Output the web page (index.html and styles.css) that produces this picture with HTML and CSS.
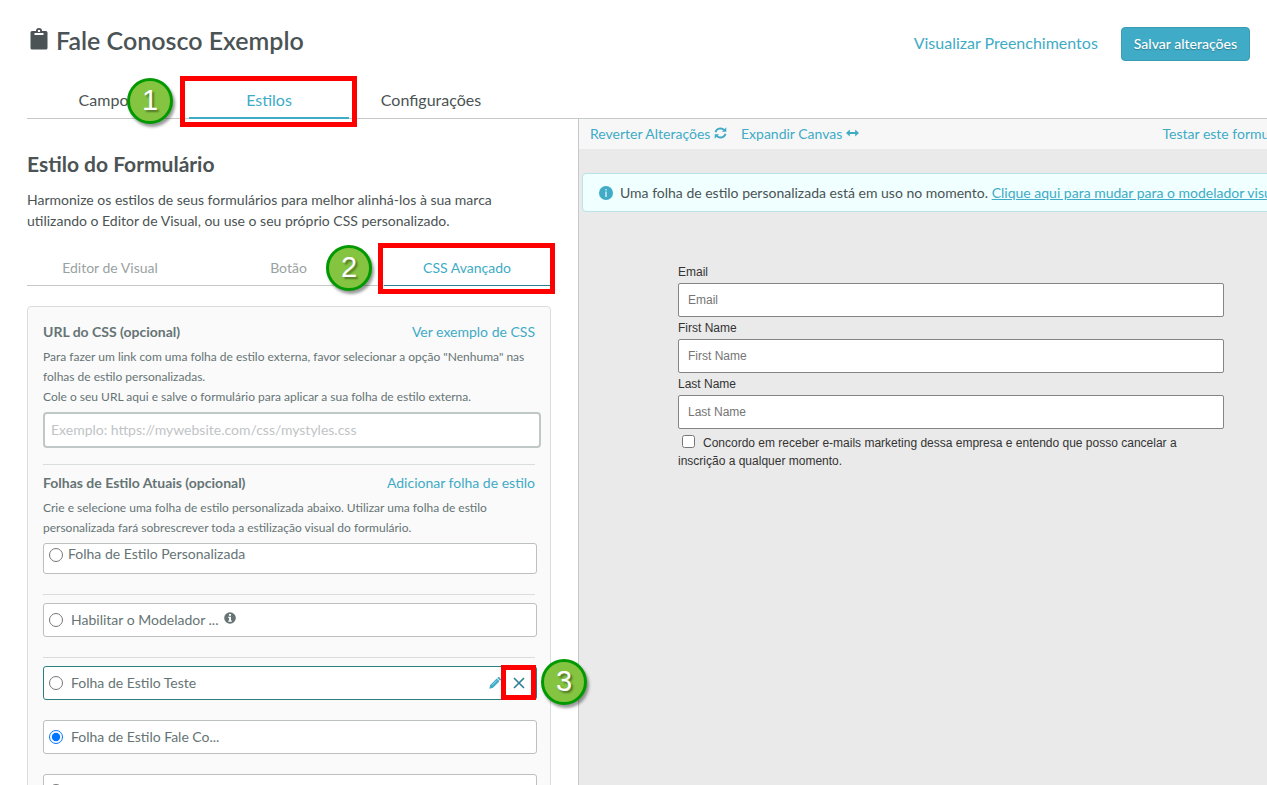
FILE: index.html
```
<!DOCTYPE html>
<html lang="pt-BR">
<head>
<meta charset="utf-8">
<meta name="viewport" content="width=device-width, initial-scale=1">
<title>Fale Conosco Exemplo</title>
<link rel="stylesheet" href="styles.css">
</head>
<body>
<div class="page">
  <header class="header">
    <h1 class="title">
      <svg class="title-icon" viewBox="0 0 18 22" width="18" height="22" aria-hidden="true"><path fill="currentColor" fill-rule="evenodd" d="M2 3h4a3 3 0 0 1 6 0h4a1.500 1.500 0 0 1 1.500 1.500v15.500a1.500 1.500 0 0 1-1.500 1.500H2a1.500 1.500 0 0 1-1.500-1.500V4.500A1.500 1.500 0 0 1 2 3zm7-1.300a1.200 1.200 0 1 0 0 2.400 1.200 1.200 0 0 0 0-2.400zM4.500 5v2h9V5z"/></svg>
      Fale Conosco Exemplo
    </h1>
    <div class="actions">
      <a class="view-link" href="#preenchimentos">Visualizar Preenchimentos</a>
      <button class="save" type="button">Salvar alterações</button>
    </div>
  </header>

  <nav class="tabs">
    <a class="tab" href="#campos">Campos</a>
    <a class="tab tab-active" href="#estilos">Estilos<span class="mark mark-tab"></span><span class="step step-tab">1</span></a>
    <a class="tab" href="#config">Configurações</a>
  </nav>

  <div class="workspace">
    <main class="editor">
      <h2 class="heading">Estilo do Formulário</h2>
      <p class="intro">Harmonize os estilos de seus formulários para melhor alinhá-los à sua marca utilizando o Editor de Visual, ou use o seu próprio CSS personalizado.</p>

      <nav class="subtabs">
        <a class="subtab" href="#visual">Editor de Visual</a>
        <a class="subtab" href="#botao">Botão</a>
        <a class="subtab subtab-active" href="#css">CSS Avançado<span class="mark mark-subtab"></span><span class="step step-subtab">2</span></a>
      </nav>

      <section class="panel">
        <div class="row">
          <label class="label" for="css-url">URL do CSS (opcional)</label>
          <a class="link" href="#exemplo">Ver exemplo de CSS</a>
        </div>
        <p class="help">Para fazer um link com uma folha de estilo externa, favor selecionar a opção "Nenhuma" nas folhas de estilo personalizadas.<br>Cole o seu URL aqui e salve o formulário para aplicar a sua folha de estilo externa.</p>
        <input class="url" id="css-url" type="text" placeholder="Exemplo: https://mywebsite.com/css/mystyles.css">
        <hr class="rule">
        <div class="row row-sheets">
          <h3 class="label">Folhas de Estilo Atuais (opcional)</h3>
          <a class="link" href="#adicionar">Adicionar folha de estilo</a>
        </div>
        <p class="help">Crie e selecione uma folha de estilo personalizada abaixo. Utilizar uma folha de estilo personalizada fará sobrescrever toda a estilização visual do formulário.</p>
        <label class="option option-custom"><input class="radio" type="radio" name="sheet">Folha de Estilo Personalizada</label>
        <hr class="rule">
        <label class="option option-ruled"><input class="radio" type="radio" name="sheet">Habilitar o Modelador ...
          <svg class="hint" viewBox="0 0 12 12" width="12" height="12" aria-hidden="true"><circle cx="6" cy="6" r="5.800" fill="currentColor"/><path fill="#fff" d="M5 2h2v1.800H5zM4.300 4.800H7v3.700h.8v1.200H4.300V8.500h.8V6h-.8z"/></svg>
        </label>
        <hr class="rule">
        <div class="option option-ruled option-focus">
          <input class="radio" type="radio" name="sheet" id="sheet-teste"><label for="sheet-teste">Folha de Estilo Teste</label>
          <button class="tool" type="button" aria-label="Editar"><svg viewBox="0 0 12 12" width="12" height="12"><path fill="#40abc6" d="M.3 11.700 1.200 8 7.700 1.500l2.800 2.800L4 10.800zM8.300.9l.6-.6a1 1 0 0 1 1.400 0l1.400 1.400a1 1 0 0 1 0 1.400l-.6.6z"/><path d="M3 8.300 7.800 3.500" stroke="#c9e8f0" stroke-width=".7"/></svg></button>
          <button class="tool tool-close" type="button" aria-label="Excluir"><svg viewBox="0 0 12 12" width="12" height="12"><path d="M1 1l10 10M11 1L1 11" stroke="#2b7f93" stroke-width="1.600" fill="none"/></svg><span class="mark mark-close"></span><span class="step step-close">3</span></button>
        </div>
        <label class="option"><input class="radio" type="radio" name="sheet" checked>Folha de Estilo Fale Co...</label>
        <div class="option"><input class="radio" type="radio" name="sheet" aria-label="Folha de estilo"></div>
      </section>
    </main>

    <section class="preview">
      <div class="toolbar">
        <a class="link" href="#reverter">Reverter Alterações <svg viewBox="0 0 12 12" width="13" height="12" aria-hidden="true"><path d="M1 5.200a5 4.500 0 0 1 8.800-2M11 6.800a5 4.500 0 0 1-8.800 2" fill="none" stroke="currentColor" stroke-width="1.800"/><path fill="currentColor" d="M11.800.3v4.400H7.400zM.2 11.700V7.300h4.400z"/></svg></a>
        <a class="link" href="#expandir">Expandir Canvas <svg viewBox="0 0 13 12" width="13" height="12" aria-hidden="true"><path fill="currentColor" d="M0 6l3.800-3.500V5h5.400V2.500L13 6 9.200 9.500V7H3.800v2.500z"/></svg></a>
        <a class="link toolbar-end" href="#testar">Testar este formulário</a>
      </div>
      <div class="canvas">
        <div class="notice">
          <svg viewBox="0 0 14 14" width="14" height="14" aria-hidden="true"><circle cx="7" cy="7" r="7" fill="#40abc6"/><path fill="#d5f1f6" d="M6.300 3h1.400v1.400H6.300zM6.300 5.500h1.400V11H6.300z"/></svg>
          <span>Uma folha de estilo personalizada está em uso no momento. <a class="notice-link" href="#modelador">Clique aqui para mudar para o modelador visual</a></span>
        </div>
        <form class="form">
          <label for="email">Email</label>
          <input class="field" id="email" type="email" placeholder="Email">
          <label for="first">First Name</label>
          <input class="field" id="first" type="text" placeholder="First Name">
          <label for="last">Last Name</label>
          <input class="field" id="last" type="text" placeholder="Last Name">
          <label class="consent"><input class="check" type="checkbox">Concordo em receber e-mails marketing dessa empresa e entendo que posso cancelar a inscrição a qualquer momento.</label>
        </form>
      </div>
    </section>
  </div>
</div>
</body>
</html>
```
FILE: styles.css
```
* { box-sizing: border-box; }

body {
  margin: 0;
  background: #fff;
  color: #4b5354;
  font-family: Lato, "Liberation Sans", sans-serif;
  font-size: 14px;
  overflow: hidden;
}

a { color: #40abc6; text-decoration: none; }

.page {
  display: flex;
  flex-direction: column;
  height: 100vh;
  overflow: hidden;
}

.header {
  display: flex;
  flex: none;
  align-items: center;
  justify-content: space-between;
  height: 82px;
  padding: 6px 17px 0 30px;
}

.title {
  display: flex;
  align-items: center;
  gap: 8px;
  margin: 0;
  padding-bottom: 8px;
  font-size: 25px;
  font-weight: 600;
  line-height: 32px;
}

.title-icon { margin-bottom: 2px; }

.actions {
  display: flex;
  align-items: center;
  gap: 23px;
}

.view-link {
  padding-bottom: 3px;
  font-size: 16px;
}

.save {
  height: 34px;
  padding: 0 12px 1px;
  border: 1px solid #3a9db6;
  border-radius: 4px;
  background: #40abc6;
  color: #fff;
  font: 500 14px Lato, sans-serif;
  text-shadow: 0 1px 1px #2b7f93;
}

.tabs {
  display: flex;
  flex: none;
  gap: 2px;
  height: 37px;
  margin-left: 27px;
  border-bottom: 1px solid #c5c9c9;
}

.tab {
  position: relative;
  width: 160px;
  color: #4b5354;
  font-size: 16px;
  line-height: 35px;
  text-align: center;
}

.tab-active {
  height: 37px;
  border-bottom: 2px solid #40abc6;
  color: #40abc6;
}

.workspace {
  display: grid;
  flex: 1;
  grid-template-columns: 578px 1fr;
  min-height: 0;
}

.editor { padding: 30px 28px 0 27px; }

.heading {
  margin: 0;
  font-size: 21px;
  font-weight: 700;
  line-height: 30px;
}

.intro {
  margin: 10px 0 0;
  line-height: 21px;
}

.subtabs {
  display: flex;
  justify-content: space-between;
  height: 36px;
  margin-top: 19px;
  background: linear-gradient(#c5c9c9, #c5c9c9) bottom / 100% 1px no-repeat;
}

.subtab {
  position: relative;
  width: 166px;
  color: #99a2a2;
  line-height: 36px;
  text-align: center;
}

.subtab-active {
  border-bottom: 1px solid #2b7f93;
  color: #40abc6;
}

.panel {
  margin-top: 20px;
  padding: 15px 15px 40px;
  width: 524px;
  border: 1px solid #d9dddd;
  border-radius: 4px;
  background: #fafafa;
  color: #667475;
}

.row {
  display: flex;
  justify-content: space-between;
  line-height: 20px;
}

.row-sheets { margin-top: 8px; }

.label {
  margin: 0;
  font-size: 14px;
  font-weight: 700;
}

.help {
  margin: 5px 0;
  font-size: 12px;
  line-height: 20px;
}

.url {
  display: block;
  width: 498px;
  height: 36px;
  padding: 0 6px 2px;
  border: 2px solid #c0c7c7;
  border-radius: 4px;
  background: #fff;
  font: 14px Lato, sans-serif;
}

.url::placeholder { color: #bfc4c6; }

.rule {
  height: 1px;
  margin: 16px 0 0;
  border: 0;
  background: #d9dddd;
}

.option {
  display: flex;
  align-items: center;
  width: 494px;
  height: 34px;
  margin-top: 20px;
  padding: 0 5px 1px;
  border: 1px solid #bcc0c0;
  border-radius: 3px;
  background: #fff;
}

.option-custom {
  align-items: flex-start;
  height: 31px;
  margin-top: 0;
  padding-top: 1px;
}

.option-custom .radio { margin: 3px 5px 0 0; }
.option-custom + .rule,
.option-ruled + .rule { margin-top: 20px; }
.option-ruled { margin-top: 8px; }
.option-focus { border-color: #2b7f7f; }

.radio {
  width: 14px;
  height: 14px;
  margin: 0 8px 0 0;
}

.hint { margin: 0 0 4px 6px; }

.tool {
  position: relative;
  display: flex;
  padding: 0;
  border: 0;
  background: none;
}

label + .tool { margin-left: auto; }
.tool-close { margin: 0 6px 0 12px; }

.mark {
  position: absolute;
  border: 5px solid #f00;
  pointer-events: none;
}

.mark-tab { inset: -6px -8px -10px -9px; }
.mark-subtab { inset: -7px -5px -9px -6px; }
.mark-close { inset: -12px -11px -11px -12px; }

.step {
  position: absolute;
  z-index: 2;
  width: 46px;
  height: 46px;
  border: 3px solid #090;
  border-radius: 50%;
  background: #85c441;
  box-shadow: 2px 3px 3px #0006;
  color: #fff;
  font: 29px/38px "Liberation Sans", sans-serif;
  text-align: center;
  text-shadow: 2px 2px 2px #0006;
}

.step-tab { top: -4px; left: -62px; }
.step-subtab { top: -5px; left: -58px; }
.step-close { top: -18px; left: 28px; }

.preview {
  overflow: hidden;
  border-left: 1px solid #c5c9c9;
  background: #eaeaea;
}

.toolbar {
  display: flex;
  gap: 14px;
  width: 741px;
  height: 30px;
  padding: 0 24px 0 11px;
  background: #f7f7f7;
  line-height: 30px;
  white-space: nowrap;
}

.toolbar-end { margin-left: auto; }

.canvas {
  width: 738px;
  margin: 24px 0 0 3px;
}

.notice {
  display: flex;
  align-items: center;
  gap: 7px;
  height: 39px;
  padding: 0 16px;
  border: 1px solid #b8e2e8;
  border-radius: 4px;
  background: #f0ffff;
  white-space: nowrap;
}

.notice-link { text-decoration: underline; }

.form {
  width: 546px;
  margin: 51px auto 0;
  color: #333;
  font: 12px/18px "Liberation Sans", sans-serif;
}

.form label { display: block; }

.field {
  display: block;
  width: 100%;
  height: 34px;
  margin: 2px 0;
  padding: 0 9px;
  border: 1px solid #858585;
  border-radius: 2px;
  background: #fff;
  font: 12px "Liberation Sans", sans-serif;
}

.field::placeholder { color: #757575; }

.form .consent { margin-top: 5px; }

.check {
  width: 13px;
  height: 13px;
  margin: 0 8px 0 4px;
  vertical-align: -1px;
}
```
